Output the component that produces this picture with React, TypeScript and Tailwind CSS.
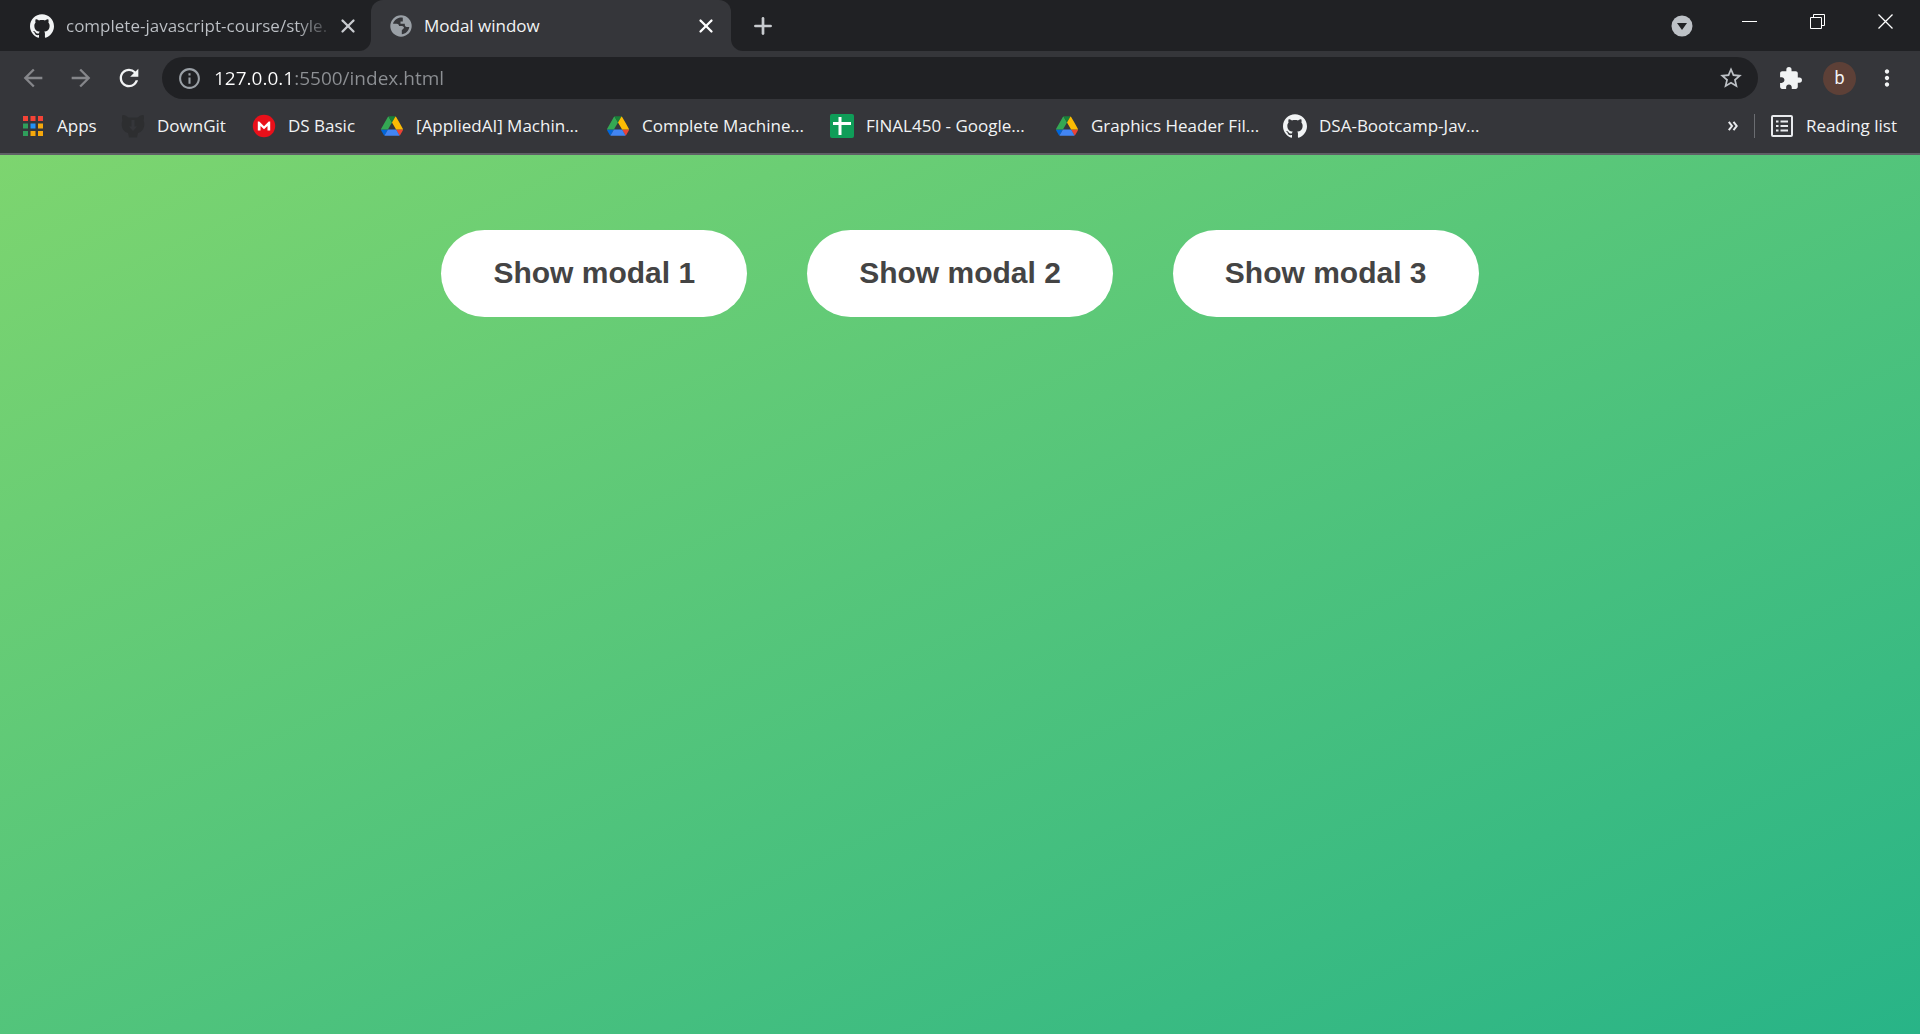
import React from "react";
import { SiGithub } from "react-icons/si";
import { Plus, X } from "lucide-react";
import { MdArrowBack, MdArrowForward, MdRefresh, MdInfoOutline, MdStarBorder, MdExtension, MdMoreVert } from "react-icons/md";

function GlobeIcon() {
  return (
    <svg viewBox="0 0 22 22" className="h-[22px] w-[22px]" aria-hidden="true">
      <circle cx="11" cy="11" r="10.700" fill="#9aa0a6" />
      <path d="M12.800 2.700 C8.500 2 4.300 4.500 3 8.800 H6.800 C8.300 8.800 9 9.800 9 11 H12 C13.200 11 14 12 14 13 L11.800 15.200 V19.300 C15.500 19 18.800 16.200 19.300 12 H16.800 C15.500 12 14.800 11 14.800 9.500 V8.800 H10.500 V6.500 H12.800 Z" fill="#35363a" />
    </svg>
  );
}

function DriveIcon() {
  return (
    <svg viewBox="0 0 87.3 78" className="h-5 w-[22px]" aria-hidden="true">
      <path d="m6.6 66.85 3.85 6.65c.8 1.4 1.95 2.5 3.3 3.3l13.75-23.8h-27.5c0 1.55.4 3.1 1.2 4.5z" fill="#0066da" />
      <path d="m43.65 25-13.75-23.8c-1.35.8-2.5 1.9-3.3 3.3l-25.4 44a9.06 9.06 0 0 0 -1.2 4.5h27.5z" fill="#34a853" />
      <path d="m73.55 76.8c1.35-.8 2.5-1.9 3.3-3.3l1.6-2.75 7.65-13.25c.8-1.4 1.2-2.95 1.2-4.5h-27.502l5.852 11.5z" fill="#ea4335" />
      <path d="m43.65 25 13.75-23.8c-1.35-.8-2.9-1.2-4.5-1.2h-18.5c-1.6 0-3.15.45-4.5 1.2z" fill="#188038" />
      <path d="m59.8 53h-32.3l-13.75 23.8c1.35.8 2.9 1.2 4.5 1.2h50.8c1.6 0 3.15-.45 4.5-1.2z" fill="#4285f4" />
      <path d="m73.4 26.5-12.7-22c-.8-1.4-1.95-2.5-3.3-3.3l-13.75 23.8 16.15 28h27.45c0-1.55-.4-3.1-1.2-4.5z" fill="#fbbc04" />
    </svg>
  );
}

function AppsIcon() {
  const colors = ["#f44336", "#f44336", "#f44336", "#2f9e5b", "#2491f5", "#f5a80c", "#2f9e5b", "#f5a80c", "#f5a80c"];
  return (
    <svg viewBox="0 0 20 20" className="h-5 w-5" aria-hidden="true">
      {colors.map((c, i) => (
        <rect key={i} x={(i % 3) * 7.5} y={Math.floor(i / 3) * 7.5} width="5" height="5" fill={c} />
      ))}
    </svg>
  );
}

function DownGitIcon() {
  return (
    <svg viewBox="0 0 24 24" className="h-6 w-6" aria-hidden="true">
      <path d="M1.500 1 C3 .5 6 2 7.500 3.500 H16.500 C18 2 21 .5 22.500 1 C23.300 3 23 5 22.600 6.500 C24 10 23.500 15 19.500 18 L17 19 L16 23.500 H8 L7 19 L4.500 18 C.5 15 0 10 1.400 6.500 C1 5 .7 3 1.500 1 Z M10.500 6 V12.500 H8 L12 17 L16 12.500 H13.500 V6 Z" fill="#2d2e30" fillRule="evenodd" />
    </svg>
  );
}

function MegaIcon() {
  return (
    <svg viewBox="0 0 24 24" className="h-6 w-6" aria-hidden="true">
      <circle cx="12" cy="12" r="11.200" fill="#e9101a" />
      <path d="M5.800 16.500 V7.500 H7.300 L12 12.200 L16.700 7.500 H18.200 V16.500 H15.500 V12 L12 15.300 L8.500 12 V16.500 Z" fill="#fff" />
    </svg>
  );
}

function SheetsIcon() {
  return (
    <svg viewBox="0 0 24 24" className="h-6 w-6" aria-hidden="true">
      <rect width="24" height="24" rx="2" fill="#0f9d58" />
      <path d="M10 3 V21 M3 9.500 H21" stroke="#fff" strokeWidth="3" />
    </svg>
  );
}

function ReadingListIcon() {
  return (
    <svg viewBox="0 0 22 22" className="h-[22px] w-[22px]" fill="none" stroke="#e8eaed" strokeWidth="2" aria-hidden="true">
      <rect x="1" y="1" width="20" height="20" rx="1" />
      <path d="M5 6.500 H7.500 M9.500 6.500 H17 M5 11 H7.500 M9.500 11 H17 M5 15.500 H7.500 M9.500 15.500 H17" />
    </svg>
  );
}

const bookmarks = [
  { label: "Apps", icon: <AppsIcon />, width: "w-[39px]" },
  { label: "DownGit", icon: <DownGitIcon />, width: "w-[70px]" },
  { label: "DS Basic", icon: <MegaIcon />, width: "w-[67px]" },
  { label: "[AppliedAI] Machin...", icon: <DriveIcon />, width: "w-[165px]" },
  { label: "Complete Machine...", icon: <DriveIcon />, width: "w-[163px]" },
  { label: "FINAL450 - Google...", icon: <SheetsIcon />, width: "w-[164px]" },
  { label: "Graphics Header Fil...", icon: <DriveIcon />, width: "w-[167px]" },
  { label: "DSA-Bootcamp-Jav...", icon: <SiGithub size={24} />, width: "w-[166px]" },
];

const windowControls = [
  { name: "Minimize", d: "M0 7.500 H15" },
  { name: "Restore", d: "M.5 3.500 H11.500 V14.500 H.5 Z M3.500 3 V.5 H14.500 V11.500 H12" },
  { name: "Close", d: "M.5 .5 L14.500 14.500 M14.500 .5 L.5 14.500" },
];

function TabStrip() {
  return (
    <div className="flex h-[51px]">
      <div className="flex w-[371px] shrink-0 items-center rounded-br-xl bg-[#202124] pl-[30px] pr-3">
        <SiGithub size={24} />
        <span className="ml-3 grow whitespace-nowrap bg-linear-to-r from-[#bdc1c6] from-85% to-[#202124] bg-clip-text text-[17px] text-transparent">
          complete-javascript-course/style.
        </span>
        <button aria-label="Close tab" className="text-[#c8cbcf]"><X size={22} strokeWidth={2.5} /></button>
      </div>
      <div className="w-[360px] shrink-0 bg-[#202124]">
        <div className="flex h-full items-center rounded-t-xl bg-[#35363a] pl-[19px] pr-[14px]">
          <GlobeIcon />
          <span className="ml-3 grow text-[17px]">Modal window</span>
          <button aria-label="Close tab" className="text-white"><X size={22} strokeWidth={2.5} /></button>
        </div>
      </div>
      <div className="flex grow items-center rounded-bl-xl bg-[#202124]">
        <button aria-label="New tab" className="ml-[19px] text-[#c8cbcf]"><Plus size={26} strokeWidth={2.5} /></button>
        <button aria-label="Search tabs" className="ml-auto mr-[49px]">
          <svg viewBox="0 0 22 22" className="h-[22px] w-[22px]"><circle cx="11" cy="11" r="10.500" fill="#bdc1c6" /><path d="M6 8 H16 L11 15 Z" fill="#202124" /></svg>
        </button>
        <div className="flex h-full gap-[53px] pr-[27px] pt-[14px]">
          {windowControls.map(({ name, d }) => (
            <button key={name} aria-label={name} className="h-[15px] w-[15px]">
              <svg viewBox="0 0 15 15" className="h-[15px] w-[15px]" fill="none" stroke="#fff" strokeWidth={name === "Close" ? 1.3 : 1}><path d={d} /></svg>
            </button>
          ))}
        </div>
      </div>
    </div>
  );
}

function Toolbar() {
  return (
    <div className="flex h-12 items-end">
      <div className="flex h-[42px] w-full items-center">
        <div className="flex w-[162px] shrink-0 gap-5 pl-[19px]">
          <button aria-label="Back" className="text-[#85868a]"><MdArrowBack size={28} /></button>
          <button aria-label="Forward" className="text-[#85868a]"><MdArrowForward size={28} /></button>
          <button aria-label="Reload"><MdRefresh size={28} /></button>
        </div>
        <div className="flex h-full grow items-center rounded-full bg-[#202124] pl-[15px] pr-[14px]">
          <MdInfoOutline size={25} className="text-[#9aa0a6]" />
          <input
            aria-label="Address"
            defaultValue="127.0.0.1:5500/index.html"
            className="ml-3 grow bg-[linear-gradient(to_right,#ffffff_80px,#8d9094_80px)] bg-clip-text text-[19px] text-transparent outline-none"
          />
          <button aria-label="Bookmark" className="text-[#bdc1c6]"><MdStarBorder size={26} /></button>
        </div>
        <div className="flex shrink-0 items-center pl-5 pr-5">
          <button aria-label="Extensions"><MdExtension size={25} /></button>
          <button aria-label="Profile" className="ml-5 h-[33px] w-[33px] rounded-full bg-[#5d4037] font-[Roboto] text-lg leading-none">b</button>
          <button aria-label="Menu" className="ml-[18px]"><MdMoreVert size={26} /></button>
        </div>
      </div>
    </div>
  );
}

function BookmarksBar() {
  return (
    <div className="flex h-14 items-center border-b-2 border-[#5f6166] pl-[21px] pr-[23px] text-[17px]">
      <nav aria-label="Bookmarks" className="flex gap-[25px]">
        {bookmarks.map((b) => (
          <a key={b.label} href="#" className="flex items-center gap-3 whitespace-nowrap">
            <span className="flex w-6 justify-center">{b.icon}</span>
            <span className={b.width}>{b.label}</span>
          </a>
        ))}
      </nav>
      <button aria-label="More bookmarks" className="ml-auto">
        <svg viewBox="0 0 10 10" className="h-[10px] w-[10px]" fill="none" stroke="#e8eaed" strokeWidth="2"><path d="M.8 .8 L4 5 L.8 9.200 M5.500 .8 L8.700 5 L5.500 9.200" /></svg>
      </button>
      <span className="mx-4 h-6 w-px bg-[#6b6d71]" />
      <button className="flex items-center gap-[13px] whitespace-nowrap"><ReadingListIcon />Reading list</button>
    </div>
  );
}

export default function App() {
  return (
    <div className="flex min-h-screen flex-col font-['Open_Sans',sans-serif]">
      <header className="bg-[#35363a] text-[#f1f3f4]">
        <TabStrip />
        <Toolbar />
        <BookmarksBar />
      </header>
      <main className="flex grow items-start justify-center gap-[60px] bg-linear-to-tl/srgb from-[#28b487] to-[#7dd56f] pt-[75px] font-['Liberation_Sans',Arial,sans-serif]">
        {[1, 2, 3].map((n) => (
          <button key={n} className="rounded-full bg-white px-[52px] pt-[25px] pb-[27px] text-[30px] leading-[35px] font-bold text-[#444]">
            Show modal {n}
          </button>
        ))}
      </main>
    </div>
  );
}
